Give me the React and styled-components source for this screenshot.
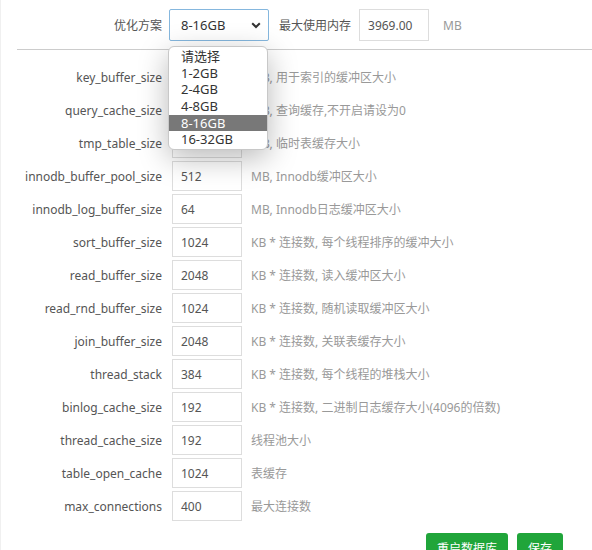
import React from 'react';
import styled, { createGlobalStyle } from 'styled-components';

const rows = [
  { name: 'key_buffer_size', value: '384', desc: 'MB, 用于索引的缓冲区大小' },
  { name: 'query_cache_size', value: '192', desc: 'MB, 查询缓存,不开启请设为0' },
  { name: 'tmp_table_size', value: '1024', desc: 'MB, 临时表缓存大小' },
  { name: 'innodb_buffer_pool_size', value: '512', desc: 'MB, Innodb缓冲区大小' },
  { name: 'innodb_log_buffer_size', value: '64', desc: 'MB, Innodb日志缓冲区大小' },
  { name: 'sort_buffer_size', value: '1024', desc: 'KB * 连接数, 每个线程排序的缓冲大小' },
  { name: 'read_buffer_size', value: '2048', desc: 'KB * 连接数, 读入缓冲区大小' },
  { name: 'read_rnd_buffer_size', value: '1024', desc: 'KB * 连接数, 随机读取缓冲区大小' },
  { name: 'join_buffer_size', value: '2048', desc: 'KB * 连接数, 关联表缓存大小' },
  { name: 'thread_stack', value: '384', desc: 'KB * 连接数, 每个线程的堆栈大小' },
  { name: 'binlog_cache_size', value: '192', desc: 'KB * 连接数, 二进制日志缓存大小(4096的倍数)' },
  { name: 'thread_cache_size', value: '192', desc: '线程池大小' },
  { name: 'table_open_cache', value: '1024', desc: '表缓存' },
  { name: 'max_connections', value: '400', desc: '最大连接数' },
];

const options = ['请选择', '1-2GB', '2-4GB', '4-8GB', '8-16GB', '16-32GB'];

export default function App() {
  return (
    <>
      <GlobalStyle />
      <Page>
        <TopBar>
          <Label>优化方案</Label>
          <Select>
            <span>8-16GB</span>
            <svg width="10" height="7" viewBox="0 0 10 7">
              <path d="M1.2 1.2 L5 5 L8.8 1.2" fill="none" stroke="#333" strokeWidth="2" />
            </svg>
          </Select>
          <TopText>最大使用内存</TopText>
          <Field tall>3969.00</Field>
          <Unit>MB</Unit>
        </TopBar>
        <Divider />

        {rows.map((r) => (
          <Row key={r.name}>
            <Label>{r.name}</Label>
            <Field>{r.value}</Field>
            <Desc>{r.desc}</Desc>
          </Row>
        ))}

        <Actions>
          <GreenButton>重启数据库</GreenButton>
          <GreenButton>保存</GreenButton>
        </Actions>

        <Dropdown>
          {options.map((o) => (
            <Option key={o} active={o === '8-16GB'}>
              {o}
            </Option>
          ))}
        </Dropdown>
      </Page>
    </>
  );
}

const GlobalStyle = createGlobalStyle`
  body {
    margin: 0;
    background: #fff;
    font-family: "Noto Sans", "Noto Sans CJK SC", sans-serif;
  }
`;

const Page = styled.div`
  position: relative;
  height: 550px;
  overflow: hidden;
  border-left: 1px solid #f0f0f0;
  box-sizing: border-box;
`;

const TopBar = styled.div`
  display: flex;
  align-items: center;
  padding-top: 9px;
  height: 32px;
`;

const Label = styled.div`
  width: 161px;
  flex-shrink: 0;
  text-align: right;
  padding-right: 10px;
  box-sizing: content-box;
  font-size: 12px;
  color: #555;
  white-space: nowrap;
`;

const Select = styled.div`
  width: 100px;
  height: 32px;
  box-sizing: border-box;
  border: 1px solid #85b7de;
  border-radius: 2px;
  display: flex;
  align-items: center;
  justify-content: space-between;
  padding: 0 7px 0 11px;
  font-size: 13px;
  color: #333;
  margin-left: -3px;
`;

const TopText = styled.span`
  margin-left: 10px;
  font-size: 12px;
  color: #555;
`;

const Field = styled.div`
  width: 70px;
  height: ${(p) => (p.tall ? '32px' : '30px')};
  box-sizing: border-box;
  border: 1px solid #ddd;
  padding-left: 8px;
  display: flex;
  align-items: center;
  font-size: 12px;
  color: #555;
  margin-left: ${(p) => (p.tall ? '8px' : '0')};
  flex-shrink: 0;
`;

const Unit = styled.span`
  margin-left: 14px;
  font-size: 12px;
  color: #999;
`;

const Divider = styled.div`
  margin: 8px 0 12px 16px;
  border-top: 1px solid #ccc;
`;

const Row = styled.div`
  display: flex;
  align-items: center;
  height: 30px;
  margin-bottom: 3px;
`;

const Desc = styled.span`
  margin-left: 9px;
  font-size: 12px;
  color: #999;
  white-space: nowrap;
`;

const Actions = styled.div`
  display: flex;
  justify-content: flex-end;
  gap: 9px;
  padding: 9px 29px 0 0;
`;

const GreenButton = styled.button`
  height: 30px;
  padding: 0 11px;
  border: 0;
  border-radius: 3px;
  background: #20a53a;
  color: #fff;
  font-family: inherit;
  font-size: 12px;
`;

const Dropdown = styled.div`
  position: absolute;
  left: 167px;
  top: 46px;
  width: 100px;
  box-sizing: border-box;
  padding: 1px 0;
  background: #fff;
  border: 1px solid #c8c8c8;
  border-radius: 6px;
  overflow: hidden;
  box-shadow: 0 8px 30px rgba(0, 0, 0, 0.28);
`;

const Option = styled.div`
  height: 16.7px;
  line-height: 16.7px;
  padding-left: 12px;
  font-size: 13px;
  color: ${(p) => (p.active ? '#fff' : '#333')};
  background: ${(p) => (p.active ? '#787878' : 'transparent')};
`;
